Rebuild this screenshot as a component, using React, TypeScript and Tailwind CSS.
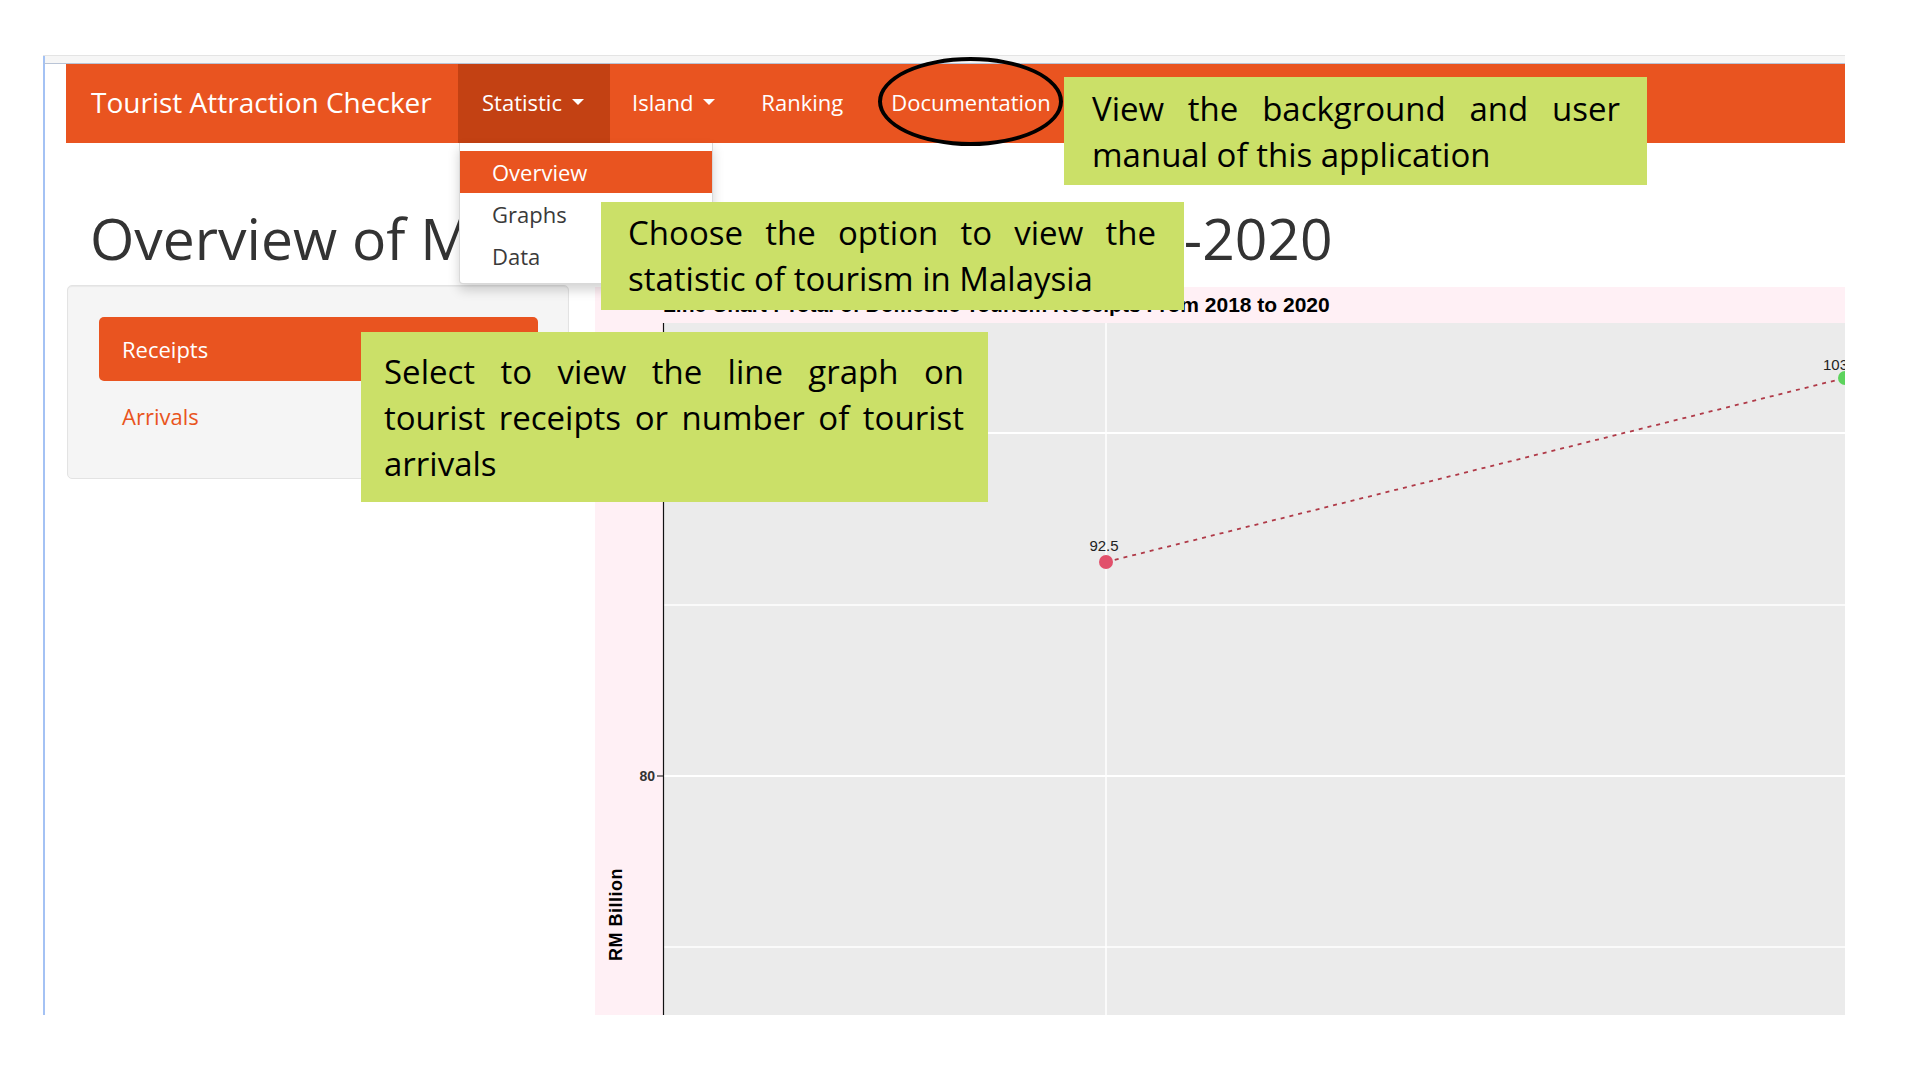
import React from "react"

const ORANGE = "bg-[#E95420]"

function Caret() {
  return <span className="ml-[10px] inline-block w-0 h-0 border-x-[6px] border-x-transparent border-t-[6px] border-t-white" />
}

function Navbar() {
  return (
    <div className={`h-[79px] w-[1779px] ${ORANGE} flex items-stretch text-white`}>
      <div className="w-[392px] pl-[25px] pb-[3px] flex items-center text-[28px]">Tourist Attraction Checker</div>
      <div className="relative w-[152px] pl-[24px] pb-[3px] flex items-center bg-[#C34113] text-[22px]">
        Statistic
        <Caret />
        {/* open dropdown */}
        <div className="absolute left-[1px] top-full z-10 w-[254px] bg-white border border-t-0 border-black/15 rounded-b-[4px] shadow-[0_6px_12px_rgba(0,0,0,0.175)] pt-[8px] pb-[6px] text-[22px]">
          <div className={`h-[42px] flex items-center pl-[32px] ${ORANGE} text-white`}>Overview</div>
          <div className="h-[42px] flex items-center pl-[32px] text-[#3a3a3a]">Graphs</div>
          <div className="h-[42px] flex items-center pl-[32px] text-[#3a3a3a]">Data</div>
        </div>
      </div>
      <div className="pl-[22px] pr-[23px] pb-[3px] flex items-center text-[22px]">
        Island
        <Caret />
      </div>
      <div className="px-[23px] pb-[3px] flex items-center text-[22px]">Ranking</div>
      <div className="px-[25px] pb-[3px] flex items-center text-[22px]">Documentation</div>
    </div>
  )
}

function Sidebar() {
  return (
    <div className="w-[502px] h-[194px] flex-none bg-[#f5f5f5] border border-[#e3e3e3] rounded-[5px] shadow-[inset_0_1px_1px_rgba(0,0,0,0.05)] pt-[31px] pl-[31px]">
      <div className={`w-[439px] h-[64px] rounded-[5px] ${ORANGE} text-white text-[22px] pl-[23px] flex items-center`}>Receipts</div>
      <div className="w-[439px] h-[64px] mt-[3px] rounded-[5px] text-[#E95420] text-[22px] pl-[23px] flex items-center">Arrivals</div>
    </div>
  )
}

function Chart() {
  return (
    <div className="w-[1250px] h-[728px] flex-none mt-[2px] bg-[#FFF0F5] flex flex-col font-['Liberation_Sans',Arial,sans-serif]">
      <div className="h-[36px] pl-[68px] flex items-center text-[21px] font-bold text-black whitespace-nowrap">
        Line Chart : Total of Domestic Tourism Receipts From 2018 to 2020
      </div>
      <div className="flex flex-1">
        <div className="w-[68px] flex-none flex items-end pb-[54px] pl-[8px]">
          <span className="[writing-mode:vertical-rl] rotate-180 text-[18px] font-bold text-black tracking-[0.5px]">RM Billion</span>
        </div>
        <svg width="1182" height="692" className="flex-none overflow-visible">
          <rect x="0" y="0" width="1182" height="692" fill="#EBEBEB" />
          <line x1="0" y1="110" x2="1182" y2="110" stroke="#fff" strokeWidth="2" />
          <line x1="0" y1="282" x2="1182" y2="282" stroke="#fff" strokeWidth="1.5" />
          <line x1="0" y1="453" x2="1182" y2="453" stroke="#fff" strokeWidth="2" />
          <line x1="0" y1="624" x2="1182" y2="624" stroke="#fff" strokeWidth="1.5" />
          <line x1="443" y1="0" x2="443" y2="692" stroke="#fff" strokeWidth="1.5" />
          <line x1="0.5" y1="0" x2="0.5" y2="692" stroke="#111" strokeWidth="1.2" />
          <line x1="-6" y1="453" x2="0" y2="453" stroke="#333" strokeWidth="1.2" />
          <text x="-8" y="458" textAnchor="end" fontSize="14" fontWeight="bold" fill="#333">80</text>
          <line x1="443" y1="239" x2="1182" y2="55" stroke="#B03A48" strokeWidth="1.8" strokeDasharray="4 5" />
          <circle cx="443" cy="239" r="7" fill="#E1506B" />
          <circle cx="1182" cy="55" r="7" fill="#5DD35D" />
          <text x="441" y="228" textAnchor="middle" fontSize="15" fill="#222">92.5</text>
          <text x="1160" y="47" fontSize="15" fill="#222">103.3</text>
        </svg>
      </div>
    </div>
  )
}

function Note({ className, children }: { className: string; children: React.ReactNode }) {
  return (
    <div className={`absolute z-20 bg-[#CBE068] text-black text-[33px] leading-[46px] text-justify ${className}`}>
      {children}
    </div>
  )
}

export default function App() {
  return (
    <div className="relative w-[1920px] h-[1080px] bg-white overflow-hidden font-['Open_Sans',sans-serif]">
      {/* browser window frame, cut at the edges */}
      <div className="ml-[43px] mt-[55px] w-[1802px] h-[960px] border-t border-[#e4e4e4] overflow-hidden">
        <div className="h-[7px] bg-[#f6f6f6] border-l-2 border-[#a4c2f4]" />
        <div className="h-[952px] border-l-2 border-t border-[#a4c2f4] border-t-[#b9c4d6] pl-[21px] overflow-hidden">
          <Navbar />
          <h1 className="ml-[24px] mt-[64px] text-[57px] leading-[63px] text-[#333] whitespace-nowrap">
            Overview of Malaysia Tourism From 2018-2020
          </h1>
          <div className="mt-[15px] pl-[1px] flex items-start gap-[26px]">
            <Sidebar />
            <Chart />
          </div>
        </div>
      </div>

      {/* highlight ring on Documentation */}
      <div className="absolute left-[878px] top-[57px] w-[185px] h-[89px] rounded-[50%] border-[4px] border-black z-20" />

      <Note className="left-[1064px] top-[77px] w-[583px] h-[108px] pl-[28px] pr-[27px] pt-[9px]">
        View the background and user manual of this application
      </Note>
      <Note className="left-[601px] top-[202px] w-[583px] h-[108px] pl-[27px] pr-[28px] pt-[8px]">
        Choose the option to view the statistic of tourism in Malaysia
      </Note>
      <Note className="left-[361px] top-[332px] w-[627px] h-[170px] pl-[23px] pr-[24px] pt-[17px]">
        Select to view the line graph on tourist receipts or number of tourist arrivals
      </Note>
    </div>
  )
}
